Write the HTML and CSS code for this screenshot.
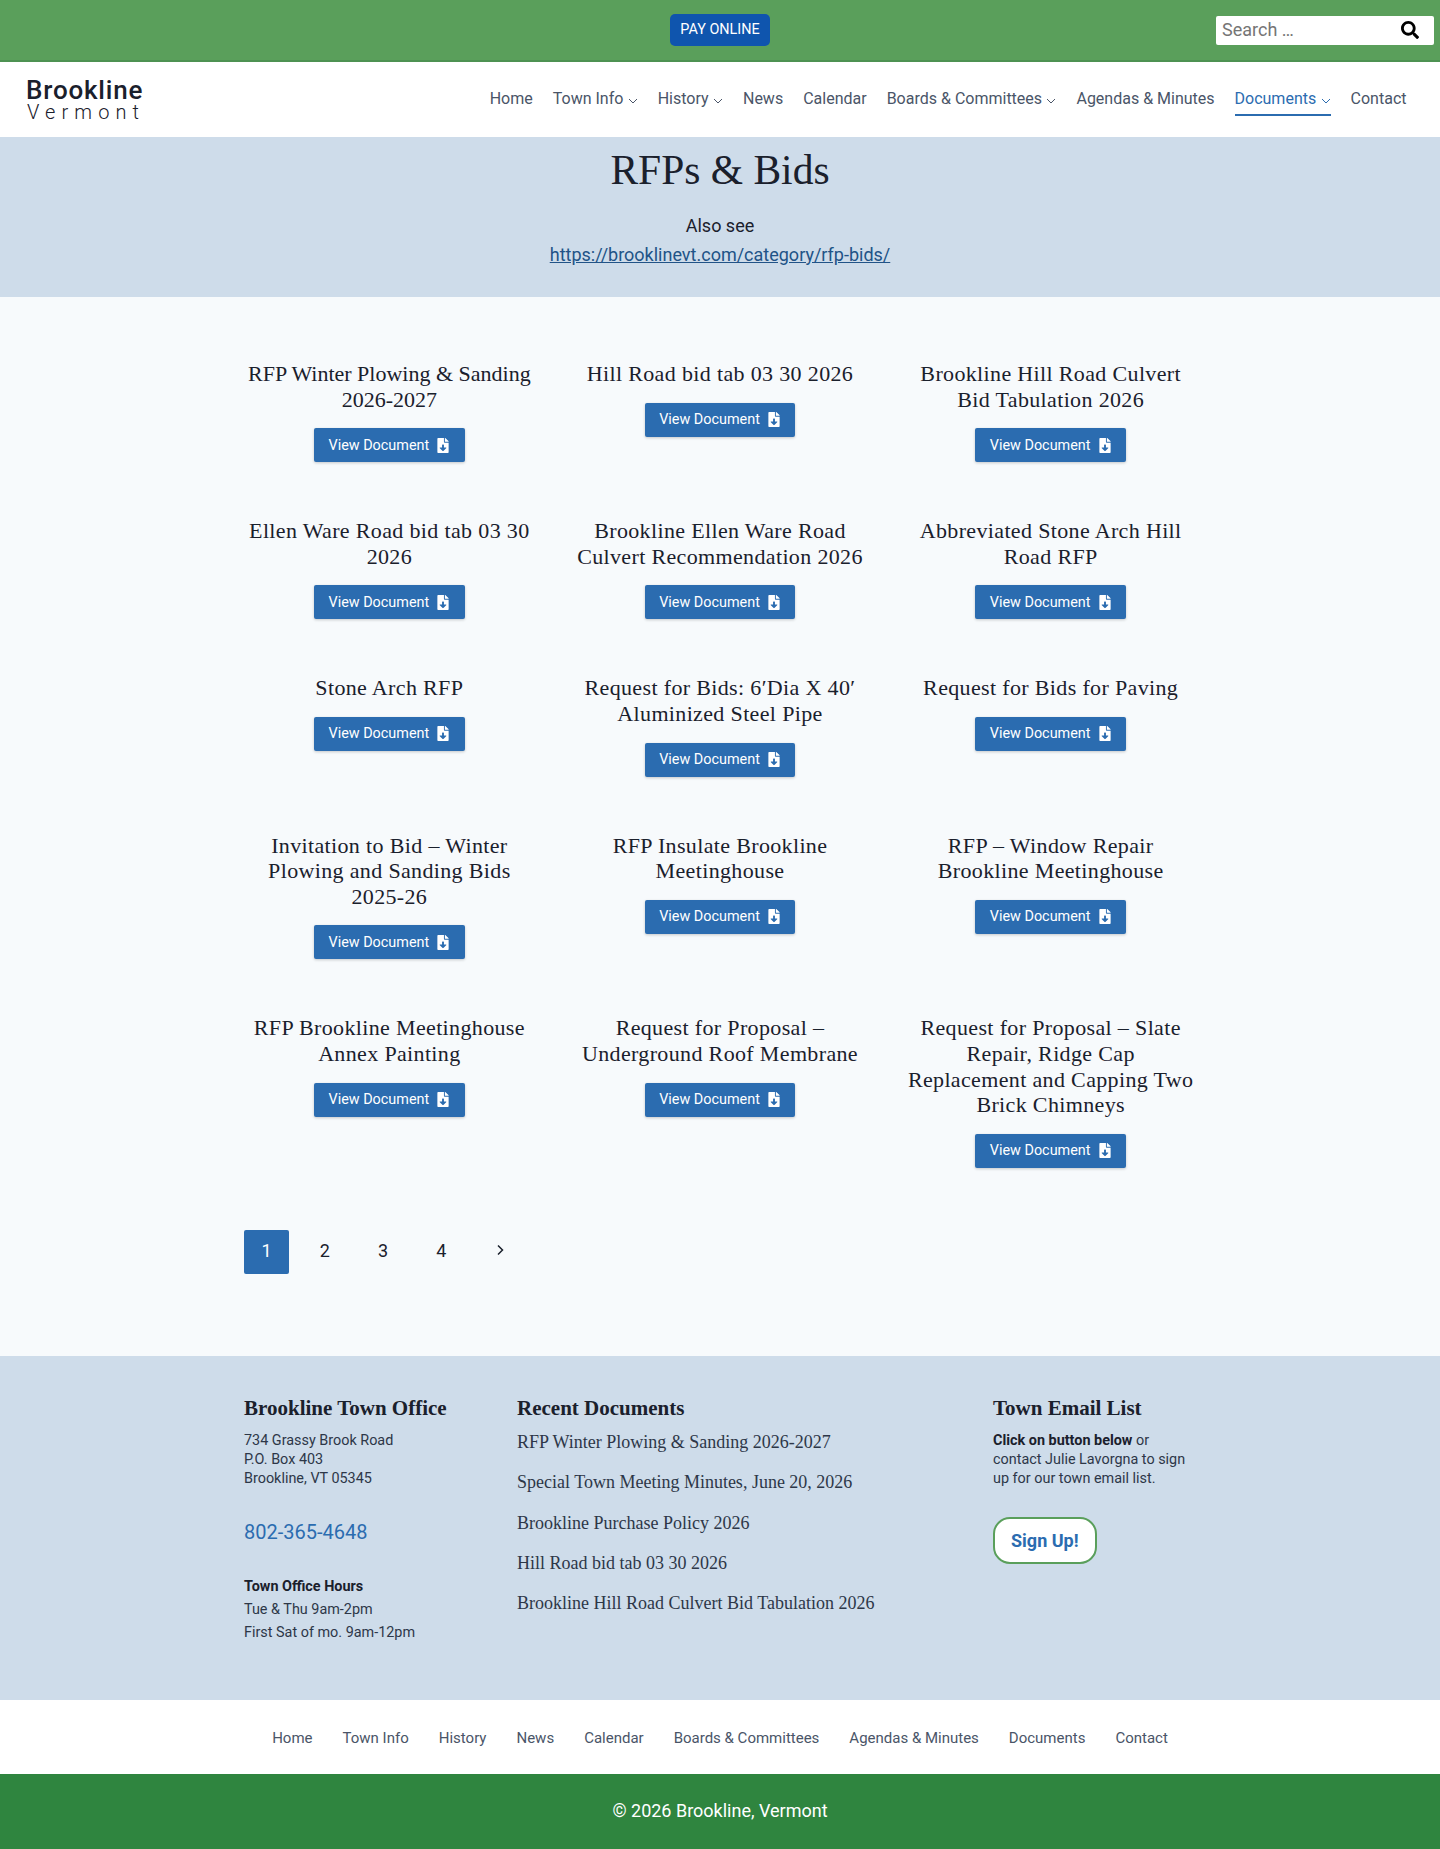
FILE: index.html
```html
<!DOCTYPE html>
<html lang="en">
<head>
    <meta charset="utf-8">
    <title>RFPs &amp; Bids - Brookline, Vermont</title>
    <link rel="stylesheet" href="styles.css">
</head>
<body>
    <svg class="icon-defs">
        <symbol id="file-down" viewBox="0 0 384 512"><path d="M224 136V0H24C10.7 0 0 10.7 0 24v464c0 13.3 10.7 24 24 24h336c13.3 0 24-10.7 24-24V160H248c-13.2 0-24-10.8-24-24zm76.45 211.36l-96.42 95.7c-6.65 6.61-17.39 6.61-24.04 0l-96.42-95.7C73.42 337.29 80.54 320 94.82 320H160v-80c0-8.84 7.16-16 16-16h32c8.84 0 16 7.16 16 16v80h65.18c14.28 0 21.4 17.29 11.27 27.36zM377 105L279.1 7c-4.5-4.5-10.6-7-17-7H256v128h128v-6.1c0-6.3-2.5-12.4-7-16.9z"/></symbol>
        <symbol id="chevron" viewBox="0 0 10 6"><path d="M1 1l4 4 4-4"/></symbol>
    </svg>

    <div class="top-bar">
        <div></div>
        <a class="pay-btn" href="#">PAY ONLINE</a>
        <form class="search-box">
            <span class="search-text">Search …</span>
            <svg class="search-icon" viewBox="0 0 512 512"><path d="M505 442.7L405.3 343c-4.5-4.5-10.6-7-17-7H372c27.6-35.3 44-79.7 44-128C416 93.1 322.9 0 208 0S0 93.1 0 208s93.1 208 208 208c48.3 0 92.7-16.4 128-44v16.3c0 6.4 2.5 12.5 7 17l99.7 99.7c9.4 9.4 24.6 9.4 33.9 0l28.3-28.3c9.4-9.4 9.4-24.6.1-34zM208 336c-70.7 0-128-57.2-128-128 0-70.7 57.2-128 128-128 70.7 0 128 57.2 128 128 0 70.7-57.2 128-128 128z"/></svg>
        </form>
    </div>

    <header class="site-header">
        <a class="logo" href="#">
            <span class="logo-name">Brookline</span>
            <span class="logo-state">Vermont</span>
        </a>
        <nav class="main-nav">
            <a href="#">Home</a>
            <a href="#">Town Info <svg class="chevron"><use href="#chevron"/></svg></a>
            <a href="#">History <svg class="chevron"><use href="#chevron"/></svg></a>
            <a href="#">News</a>
            <a href="#">Calendar</a>
            <a href="#">Boards &amp; Committees <svg class="chevron"><use href="#chevron"/></svg></a>
            <a href="#">Agendas &amp; Minutes</a>
            <a class="current" href="#">Documents <svg class="chevron"><use href="#chevron"/></svg></a>
            <a href="#">Contact</a>
        </nav>
    </header>

    <section class="hero">
        <h1>RFPs &amp; Bids</h1>
        <p>Also see</p>
        <p><a href="#">https://brooklinevt.com/category/rfp-bids/</a></p>
    </section>

    <main class="content">
        <div class="doc-grid">
            <article class="doc-card">
                <h2 class="tight">RFP Winter Plowing &amp; Sanding 2026-2027</h2>
                <a class="doc-btn" href="#">View Document <svg><use href="#file-down"/></svg></a>
            </article>
            <article class="doc-card">
                <h2>Hill Road bid tab 03 30 2026</h2>
                <a class="doc-btn" href="#">View Document <svg><use href="#file-down"/></svg></a>
            </article>
            <article class="doc-card">
                <h2>Brookline Hill Road Culvert Bid Tabulation 2026</h2>
                <a class="doc-btn" href="#">View Document <svg><use href="#file-down"/></svg></a>
            </article>
            <article class="doc-card">
                <h2>Ellen Ware Road bid tab 03 30 2026</h2>
                <a class="doc-btn" href="#">View Document <svg><use href="#file-down"/></svg></a>
            </article>
            <article class="doc-card">
                <h2>Brookline Ellen Ware Road Culvert Recommendation 2026</h2>
                <a class="doc-btn" href="#">View Document <svg><use href="#file-down"/></svg></a>
            </article>
            <article class="doc-card">
                <h2>Abbreviated Stone Arch Hill Road RFP</h2>
                <a class="doc-btn" href="#">View Document <svg><use href="#file-down"/></svg></a>
            </article>
            <article class="doc-card">
                <h2>Stone Arch RFP</h2>
                <a class="doc-btn" href="#">View Document <svg><use href="#file-down"/></svg></a>
            </article>
            <article class="doc-card">
                <h2>Request for Bids: 6′Dia X 40′ Aluminized Steel Pipe</h2>
                <a class="doc-btn" href="#">View Document <svg><use href="#file-down"/></svg></a>
            </article>
            <article class="doc-card">
                <h2>Request for Bids for Paving</h2>
                <a class="doc-btn" href="#">View Document <svg><use href="#file-down"/></svg></a>
            </article>
            <article class="doc-card">
                <h2>Invitation to Bid – Winter Plowing and Sanding Bids 2025-26</h2>
                <a class="doc-btn" href="#">View Document <svg><use href="#file-down"/></svg></a>
            </article>
            <article class="doc-card">
                <h2>RFP Insulate Brookline Meetinghouse</h2>
                <a class="doc-btn" href="#">View Document <svg><use href="#file-down"/></svg></a>
            </article>
            <article class="doc-card">
                <h2>RFP – Window Repair Brookline Meetinghouse</h2>
                <a class="doc-btn" href="#">View Document <svg><use href="#file-down"/></svg></a>
            </article>
            <article class="doc-card">
                <h2>RFP Brookline Meetinghouse Annex Painting</h2>
                <a class="doc-btn" href="#">View Document <svg><use href="#file-down"/></svg></a>
            </article>
            <article class="doc-card">
                <h2>Request for Proposal – Underground Roof Membrane</h2>
                <a class="doc-btn" href="#">View Document <svg><use href="#file-down"/></svg></a>
            </article>
            <article class="doc-card">
                <h2>Request for Proposal – Slate Repair, Ridge Cap Replacement and Capping Two Brick Chimneys</h2>
                <a class="doc-btn" href="#">View Document <svg><use href="#file-down"/></svg></a>
            </article>
        </div>

        <nav class="pagination">
            <a class="page-num active" href="#">1</a>
            <a class="page-num" href="#">2</a>
            <a class="page-num" href="#">3</a>
            <a class="page-num" href="#">4</a>
            <a class="page-num" href="#"><svg class="page-next" viewBox="0 0 8 12"><path d="M2 1.5L6.5 6 2 10.5"/></svg></a>
        </nav>
    </main>

    <section class="footer-widgets">
        <div class="footer-grid">
            <div class="footer-col">
                <h3>Brookline Town Office</h3>
                <p class="address">734 Grassy Brook Road<br>P.O. Box 403<br>Brookline, VT 05345</p>
                <a class="phone" href="#">802-365-4648</a>
                <p class="hours"><strong>Town Office Hours</strong><br>Tue &amp; Thu 9am-2pm<br>First Sat of mo. 9am-12pm</p>
            </div>
            <div class="footer-col">
                <h3>Recent Documents</h3>
                <ul class="recent-docs">
                    <li><a href="#">RFP Winter Plowing &amp; Sanding 2026-2027</a></li>
                    <li><a href="#">Special Town Meeting Minutes, June 20, 2026</a></li>
                    <li><a href="#">Brookline Purchase Policy 2026</a></li>
                    <li><a href="#">Hill Road bid tab 03 30 2026</a></li>
                    <li><a href="#">Brookline Hill Road Culvert Bid Tabulation 2026</a></li>
                </ul>
            </div>
            <div class="footer-col">
                <h3>Town Email List</h3>
                <p class="address"><strong>Click on button below</strong> or contact Julie Lavorgna to sign up for our town email list.</p>
                <a class="signup-btn" href="#">Sign Up!</a>
            </div>
        </div>
    </section>

    <nav class="footer-nav">
        <a href="#">Home</a>
        <a href="#">Town Info</a>
        <a href="#">History</a>
        <a href="#">News</a>
        <a href="#">Calendar</a>
        <a href="#">Boards &amp; Committees</a>
        <a href="#">Agendas &amp; Minutes</a>
        <a href="#">Documents</a>
        <a href="#">Contact</a>
    </nav>

    <footer class="copyright">© 2026 Brookline, Vermont</footer>
</body>
</html>
```

FILE: styles.css
```css
:root {
    --blue: #2b6cb0;
    --dark: #1a202c;
    --nav-text: #4a5568;
    --page-bg: #f7fafc;
    --band: #cedcea;
    --serif: "Liberation Serif", "Times New Roman", serif;
}

* {
    box-sizing: border-box;
    margin: 0;
    padding: 0;
}

body {
    background: var(--page-bg);
    color: var(--dark);
    font-family: Roboto, "Liberation Sans", sans-serif;
    font-size: 16px;
    line-height: 1.6;
}

a {
    color: inherit;
    text-decoration: none;
}

.icon-defs {
    display: none;
}

/* Top Bar */
.top-bar {
    display: grid;
    grid-template-columns: 1fr auto 1fr;
    align-items: center;
    height: 62px;
    background: #5a9f5b;
    border-bottom: 2px solid #4e9252;
}

.pay-btn {
    padding: 5px 10px;
    background: #0f55ae;
    border-radius: 5px;
    color: white;
    font-size: 14.4px;
    line-height: 22px;
}

.search-box {
    justify-self: end;
    display: flex;
    align-items: center;
    justify-content: space-between;
    width: 218px;
    height: 29px;
    margin-right: 6px;
    padding: 0 15px 0 6px;
    background: white;
    border-radius: 2px;
}

.search-text {
    color: #757575;
    font-size: 18px;
}

.search-icon {
    width: 18px;
    height: 18px;
}

/* Header */
.site-header {
    display: flex;
    align-items: center;
    justify-content: space-between;
    height: 75px;
    padding: 0 33.5px 0 26px;
    background: white;
}

.logo {
    display: flex;
    flex-direction: column;
}

.logo-name {
    font-size: 26px;
    font-weight: 500;
    line-height: 24px;
    letter-spacing: 0.8px;
}

.logo-state {
    margin-left: 1px;
    font-size: 20px;
    font-weight: 300;
    line-height: 20px;
    letter-spacing: 6.1px;
}

.main-nav {
    display: flex;
    gap: 20px;
    margin-bottom: 3px;
}

.main-nav a {
    display: block;
    padding: 5px 0 3px;
    border-bottom: 2px solid transparent;
    color: var(--nav-text);
    line-height: 25px;
}

.main-nav a.current {
    border-bottom-color: var(--blue);
    color: var(--blue);
}

.chevron {
    width: 10px;
    height: 6px;
    margin-left: 0.4px;
    fill: none;
    stroke: currentColor;
    stroke-width: 1;
}

/* Hero */
.hero {
    height: 160px;
    padding-top: 6px;
    background: var(--band);
    text-align: center;
    font-size: 18px;
    line-height: 29px;
}

.hero h1 {
    margin-bottom: 14px;
    font-family: var(--serif);
    font-size: 41.5px;
    font-weight: 400;
    line-height: 54px;
}

.hero a {
    color: #215387;
    text-decoration: underline;
}

/* Document Grid */
.content {
    width: 952px;
    margin: 0 auto;
    padding: 64px 0 82px;
}

.doc-grid {
    display: grid;
    grid-template-columns: repeat(3, 1fr);
    column-gap: 40px;
    row-gap: 56px;
}

.doc-card {
    text-align: center;
}

.doc-card h2 {
    margin-bottom: 16px;
    font-family: var(--serif);
    font-size: 22px;
    font-weight: 400;
    line-height: 25.6px;
    letter-spacing: 0.35px;
}

.doc-card h2.tight {
    letter-spacing: 0;
}

.doc-btn {
    display: inline-flex;
    align-items: center;
    gap: 8px;
    height: 34px;
    padding: 0 15.5px 0 14.5px;
    background: var(--blue);
    border-radius: 2px;
    box-shadow: 0 1px 3px rgba(0, 0, 0, 0.2);
    color: white;
    font-size: 14.4px;
}

.doc-btn svg {
    width: 12px;
    height: 15px;
    fill: white;
}

/* Pagination */
.pagination {
    display: flex;
    gap: 13.3px;
    margin-top: 62px;
}

.page-num {
    display: flex;
    align-items: center;
    justify-content: center;
    width: 45px;
    height: 44px;
    border-radius: 2px;
    font-size: 18px;
}

.page-num.active {
    background: var(--blue);
    color: white;
}

.page-next {
    width: 8px;
    height: 12px;
    margin-bottom: 3px;
    fill: none;
    stroke: var(--dark);
    stroke-width: 1.5;
}

/* Footer Widgets */
.footer-widgets {
    height: 344px;
    padding-top: 38px;
    background: var(--band);
}

.footer-grid {
    display: grid;
    grid-template-columns: 233px 436px 203px;
    gap: 40px;
    width: 952px;
    margin: 0 auto;
}

.footer-col h3 {
    margin-bottom: 9px;
    font-family: var(--serif);
    font-size: 21px;
    font-weight: 700;
    line-height: 28px;
}

.address {
    color: #2d3748;
    font-size: 14.4px;
    line-height: 19px;
}

.address strong,
.hours strong {
    color: var(--dark);
    font-weight: 700;
}

.phone {
    display: block;
    margin-top: 28px;
    color: var(--blue);
    font-size: 20px;
    line-height: 32px;
}

.hours {
    margin-top: 27px;
    color: #2d3748;
    font-size: 14.4px;
    line-height: 23px;
}

.recent-docs {
    list-style: none;
    margin-top: -1px;
    color: #2d3748;
    font-family: var(--serif);
    font-size: 18px;
    line-height: 24px;
}

.recent-docs li {
    margin-bottom: 16.4px;
}

.signup-btn {
    display: inline-block;
    margin-top: 29px;
    padding: 0 16px;
    height: 47px;
    background: white;
    border: 2px solid #5a9f5b;
    border-radius: 17px;
    color: var(--blue);
    font-size: 18px;
    font-weight: 700;
    line-height: 43px;
}

/* Footer Nav */
.footer-nav {
    display: flex;
    align-items: center;
    justify-content: center;
    gap: 30px;
    height: 74px;
    padding-top: 2px;
    background: white;
    color: var(--nav-text);
    font-size: 15px;
}

.copyright {
    height: 75px;
    background: #2f853f;
    color: white;
    font-size: 18px;
    line-height: 73px;
    text-align: center;
}
```
